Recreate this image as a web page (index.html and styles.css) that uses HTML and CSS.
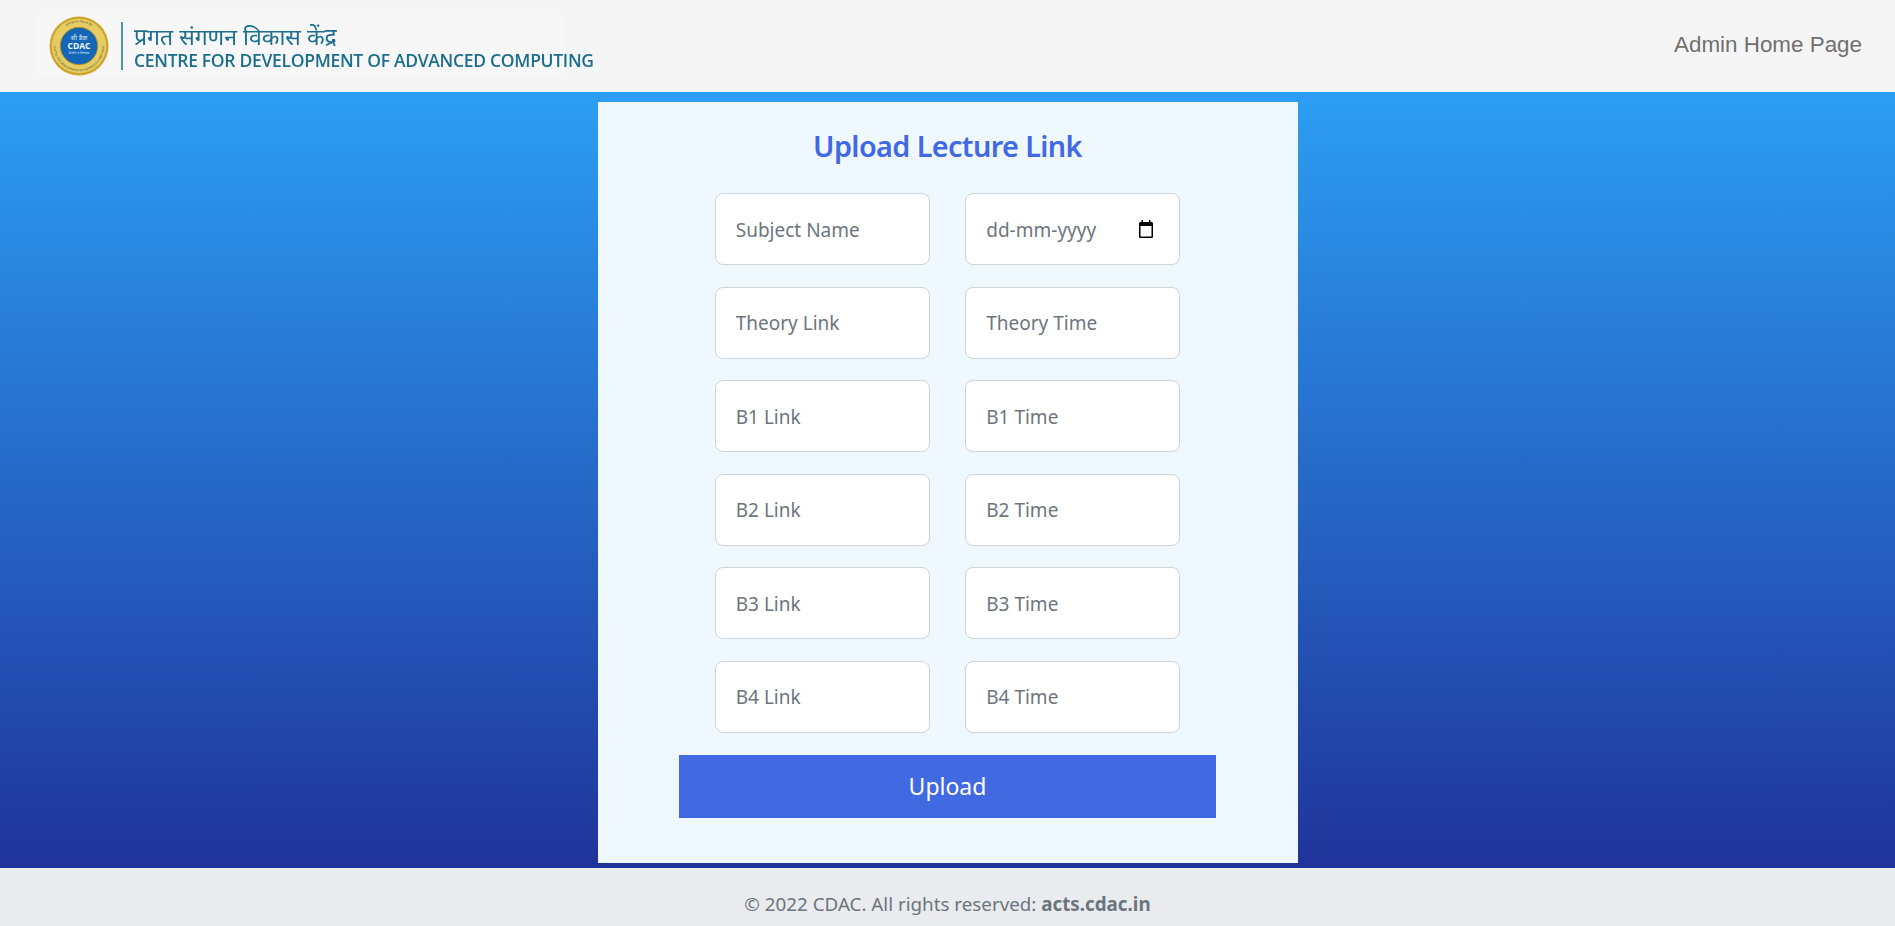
FILE: index.html
```html
<!DOCTYPE html>
<html lang="en">
<head>
<meta charset="utf-8">
<title>Upload Lecture Link</title>
<link rel="stylesheet" href="styles.css">
</head>
<body>
<header class="topbar">
  <div class="logo">
    <svg class="seal" viewBox="0 0 64 64" width="62" height="60" aria-hidden="true">
      <defs>
        <path id="arc-top" d="M7 32a25 25 0 0 1 50 0"/>
        <path id="arc-bottom" d="M5 32a27 27 0 0 0 54 0"/>
      </defs>
      <circle cx="32" cy="32" r="31.500" fill="#cfa52e"/>
      <circle cx="32" cy="32" r="29" fill="#e6cd63"/>
      <text class="seal-ring"><textPath href="#arc-top" startOffset="50%" text-anchor="middle">प्रगत संगणन विकास केंद्र</textPath></text>
      <text class="seal-ring"><textPath href="#arc-bottom" startOffset="50%" text-anchor="middle">CENTRE FOR DEVELOPMENT OF ADVANCED COMPUTING</textPath></text>
      <circle cx="32" cy="32" r="20" fill="#1467b6" stroke="#b98f24" stroke-width="1"/>
      <text class="seal-hi" x="32" y="26" text-anchor="middle">सी डैक</text>
      <text class="seal-en" x="32" y="35" text-anchor="middle">CDAC</text>
      <text class="seal-sub" x="32" y="41" text-anchor="middle">प्रगति व विकास</text>
    </svg>
    <span class="rule"></span>
    <div class="logo-text">
      <span class="logo-hi">प्रगत संगणन विकास केंद्र</span>
      <span class="logo-en">CENTRE FOR DEVELOPMENT OF ADVANCED COMPUTING</span>
    </div>
  </div>
  <a class="home" href="#">Admin Home Page</a>
</header>
<main class="stage">
  <section class="card">
    <h1 class="title">Upload Lecture Link</h1>
    <form class="fields">
      <input class="field" type="text" placeholder="Subject Name">
      <div class="field date-field"><span>dd-mm-yyyy</span>
        <svg viewBox="0 0 16 18" width="16" height="18" aria-hidden="true"><path d="M3.500 0v2H2.600C1.700 2 1 2.700 1 3.600v12.800C1 17.300 1.700 18 2.600 18h10.800c.9 0 1.600-.7 1.600-1.600V3.600c0-.9-.7-1.600-1.600-1.600h-.9V0H11v2H5V0H3.500zM2.500 6h11v10.400a.1.1 0 0 1-.1.1H2.600a.1.1 0 0 1-.1-.1V6z" fill="#000"/></svg>
      </div>
      <input class="field" type="text" placeholder="Theory Link">
      <input class="field" type="text" placeholder="Theory Time">
      <input class="field" type="text" placeholder="B1 Link">
      <input class="field" type="text" placeholder="B1 Time">
      <input class="field" type="text" placeholder="B2 Link">
      <input class="field" type="text" placeholder="B2 Time">
      <input class="field" type="text" placeholder="B3 Link">
      <input class="field" type="text" placeholder="B3 Time">
      <input class="field" type="text" placeholder="B4 Link">
      <input class="field" type="text" placeholder="B4 Time">
      <button class="submit" type="button">Upload</button>
    </form>
  </section>
</main>
<footer class="footer"><span>© 2022 CDAC. All rights reserved: <b>acts.cdac.in</b></span></footer>
</body>
</html>
```
FILE: styles.css
```css
* { box-sizing: border-box; }
html, body { margin: 0; height: 100%; }
body {
  display: flex;
  flex-direction: column;
  min-height: 926px;
  font-family: "Noto Sans", "Open Sans", sans-serif;
  color: #6c757d;
}
.topbar {
  height: 92px;
  flex: none;
  background: #f5f5f5;
  display: flex;
  align-items: center;
  justify-content: space-between;
  padding: 0 33px 0 38px;
}
.logo {
  display: flex;
  align-items: center;
  width: 528px;
  height: 62px;
  padding-left: 10px;
  background: #f7f7f7;
  filter: blur(.4px);
}
.seal { flex: none; }
.seal-ring { font-size: 3.200px; fill: #5a5330; font-family: "Noto Sans", sans-serif; }
.seal-hi { font-size: 7px; fill: #dce8f5; font-family: "Noto Sans", sans-serif; }
.seal-en { font-size: 9px; font-weight: 700; fill: #f4f8fc; font-family: "Open Sans", sans-serif; }
.seal-sub { font-size: 4px; fill: #dce8f5; font-family: "Noto Sans", sans-serif; }
.rule {
  width: 2px;
  height: 48px;
  background: #4b94ae;
  margin: 0 11px;
  flex: none;
}
.logo-text { display: flex; flex-direction: column; color: #1c6e8e; }
.logo-hi { font-size: 23px; line-height: 27px; font-family: "Noto Sans", sans-serif; }
.logo-en { font-family: "Open Sans", sans-serif; font-weight: 600; font-size: 17.500px; line-height: 20px; letter-spacing: -.3px; white-space: nowrap; }
.home {
  font-family: "Liberation Sans", Arial, sans-serif;
  font-size: 22.400px;
  color: #707070;
  text-decoration: none;
  margin-top: -2px;
}
.stage {
  flex: 1;
  display: flex;
  justify-content: center;
  align-items: flex-start;
  padding-top: 10px;
  background: linear-gradient(#2c9ef3, #20339a);
}
.card {
  width: 700px;
  height: 761px;
  background: #f0f8ff;
  padding-top: 25px;
  display: flex;
  flex-direction: column;
  align-items: center;
}
.title {
  margin: 0 0 28px;
  font-size: 28.800px;
  line-height: 38px;
  font-weight: 600;
  letter-spacing: -.6px;
  color: #4169e1;
}
.fields {
  display: grid;
  grid-template-columns: 215px 215px;
  grid-auto-rows: 72px;
  column-gap: 35.500px;
  row-gap: 21.600px;
  justify-content: center;
}
.field {
  display: flex;
  align-items: center;
  justify-content: space-between;
  width: 100%;
  height: 72px;
  border: 1px solid #ced4da;
  border-radius: 8px;
  background: #fff;
  padding: 1px 20px 0;
  font: inherit;
  font-size: 19px;
  color: #6c757d;
}
.field::placeholder { color: #6c757d; opacity: 1; }
.date-field { padding-right: 25px; }
.date-field svg { margin-top: -2px; }
.submit {
  grid-column: 1 / -1;
  justify-self: center;
  width: 537px;
  height: 63px;
  border: 0;
  background: #4169e1;
  color: #fff;
  font: inherit;
  font-size: 23px;
}
.footer {
  height: 58px;
  flex: none;
  background: #e9ebee;
  display: flex;
  align-items: center;
  justify-content: center;
  padding-top: 14px;
  font-size: 18.800px;
  color: #6c757d;
}
```
